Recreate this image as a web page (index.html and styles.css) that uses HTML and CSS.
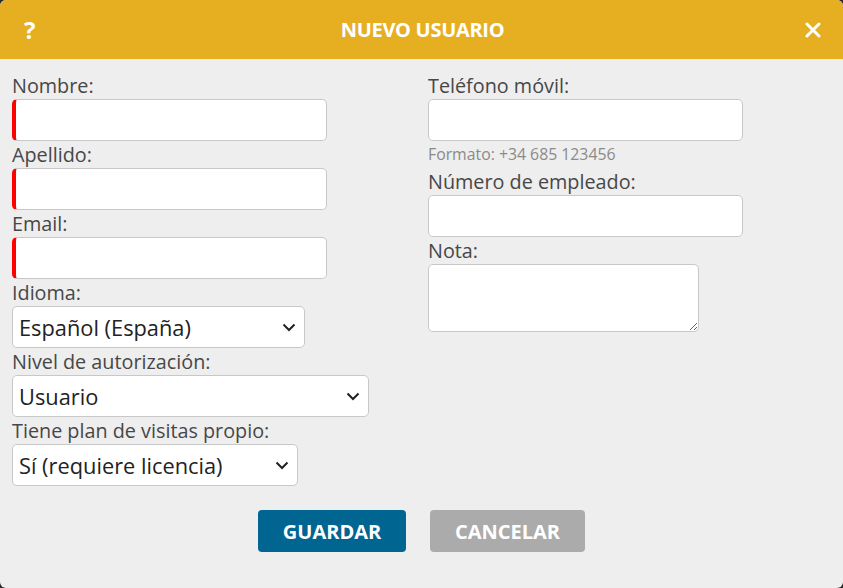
FILE: index.html
```html
<!DOCTYPE html>
<html lang="es">
<head>
<meta charset="utf-8">
<title>Nuevo usuario</title>
<link rel="stylesheet" href="styles.css">
</head>
<body>
<div class="dialog">
  <header class="head">
    <span class="help">?</span>
    <h1 class="title">NUEVO USUARIO</h1>
    <span class="close">
      <svg width="16" height="16" viewBox="0 0 16 16"><path d="M2 2 L14 14 M14 2 L2 14" stroke="#fff" stroke-width="3" stroke-linecap="round"/></svg>
    </span>
  </header>
  <div class="body">
    <div class="col">
      <label class="lbl">Nombre:</label>
      <input class="inp req w315" type="text">
      <label class="lbl">Apellido:</label>
      <input class="inp req w315" type="text">
      <label class="lbl">Email:</label>
      <input class="inp req w315" type="text">
      <label class="lbl">Idioma:</label>
      <select class="sel w293"><option>Español (España)</option></select>
      <label class="lbl">Nivel de autorización:</label>
      <select class="sel w357"><option>Usuario</option></select>
      <label class="lbl">Tiene plan de visitas propio:</label>
      <select class="sel w286"><option>Sí (requiere licencia)</option></select>
    </div>
    <div class="col">
      <label class="lbl">Teléfono móvil:</label>
      <input class="inp w315" type="text">
      <div class="hint">Formato: +34 685 123456</div>
      <label class="lbl">Número de empleado:</label>
      <input class="inp w315" type="text">
      <label class="lbl">Nota:</label>
      <textarea class="txt"></textarea>
    </div>
  </div>
  <div class="actions">
    <button class="btn save">GUARDAR</button>
    <button class="btn cancel">CANCELAR</button>
  </div>
</div>
</body>
</html>
```
FILE: styles.css
```css
* { box-sizing: border-box; }
html, body { margin: 0; padding: 0; }
body {
  background: #2b2b2b;
  font-family: "Open Sans", "DejaVu Sans", sans-serif;
}
.dialog {
  width: 843px;
  height: 588px;
  background: #eeeeee;
  border-radius: 6px;
  overflow: hidden;
}
.head {
  height: 59px;
  background: #e6af22;
  display: flex;
  align-items: center;
  justify-content: space-between;
  padding: 0 22px 0 24px;
  color: #fff;
}
.help {
  font-size: 24px;
  font-weight: 700;
  width: 20px;
  line-height: 1;
}
.title {
  margin: 0;
  font-size: 20px;
  font-weight: 700;
  letter-spacing: -0.3px;
}
.close { width: 20px; display: flex; justify-content: flex-end; }
.body {
  display: flex;
  gap: 101px;
  padding: 13px 12px 0 12px;
}
.col {
  display: flex;
  flex-direction: column;
  align-items: flex-start;
  width: 315px;
}
.lbl {
  font-size: 19.8px;
  line-height: 27px;
  height: 27px;
  color: #474747;
}
.inp {
  height: 42px;
  border: 1px solid #c8c8c8;
  border-radius: 5px;
  background: #fff;
  margin: 0;
  font: inherit;
}
.req { border-left: 4px solid #ff0000; }
.w315 { width: 315px; }
.sel {
  height: 42px;
  border: 1px solid #c8c8c8;
  border-radius: 5px;
  background: #fff url("data:image/svg+xml,%3Csvg xmlns='http://www.w3.org/2000/svg' width='14' height='9' viewBox='0 0 14 9'%3E%3Cpath d='M1.5 1.5 L7 7 L12.5 1.5' fill='none' stroke='%23222' stroke-width='2'/%3E%3C/svg%3E") no-repeat right 8px center;
  -webkit-appearance: none;
  appearance: none;
  font-family: "Open Sans", sans-serif;
  font-size: 21.8px;
  color: #222;
  padding: 0 0 0 6px;
  margin: 0;
}
.w293 { width: 293px; }
.w357 { width: 357px; }
.w286 { width: 286px; }
.hint {
  font-size: 15.8px;
  line-height: 27px;
  height: 27px;
  color: #8a8a8a;
}
.txt {
  width: 271px;
  height: 68px;
  border: 1px solid #c8c8c8;
  border-radius: 5px;
  background: #fff;
  margin: 0;
}
.actions {
  display: flex;
  justify-content: center;
  gap: 24px;
  margin-top: 24px;
}
.btn {
  height: 42px;
  border: none;
  border-radius: 4px;
  color: #fff;
  font-family: "Open Sans", sans-serif;
  font-weight: 700;
  font-size: 20px;
  padding: 0;
}
.save { background: #006591; width: 148px; }
.cancel { background: #ababab; width: 155px; }
```
